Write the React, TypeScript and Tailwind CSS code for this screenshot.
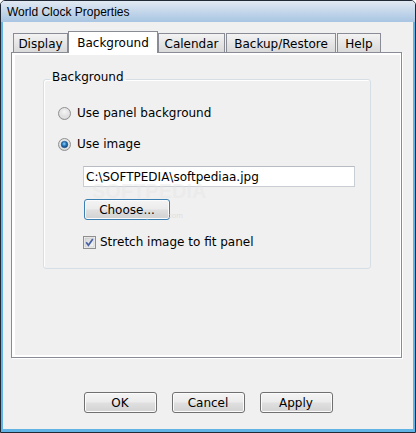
import React from 'react'

type Tab = {
  label: string;
  width: string;
  selected?: boolean;
}

const tabs: Tab[] = [
  { label: 'Display', width: 'w-[55px]' },
  { label: 'Background', width: 'w-[90px]', selected: true },
  { label: 'Calendar', width: 'w-[67px]' },
  { label: 'Backup/Restore', width: 'w-[110px] ml-[1px]' },
  { label: 'Help', width: 'w-[44px] ml-[1px]' },
]

const Radio = ({ checked }: { checked?: boolean }) => (
  <svg width="13" height="13" viewBox="0 0 13 13" className="shrink-0">
    <defs>
      <radialGradient id="rbg" cx="50%" cy="35%" r="70%">
        <stop offset="0%" stopColor="#f6f6f6" />
        <stop offset="100%" stopColor="#cfcfcf" />
      </radialGradient>
      <radialGradient id="rdot" cx="45%" cy="40%" r="60%">
        <stop offset="0%" stopColor="#8fd3f7" />
        <stop offset="55%" stopColor="#2272b8" />
        <stop offset="100%" stopColor="#0d3f73" />
      </radialGradient>
    </defs>
    <circle cx="6.5" cy="6.5" r="6" fill="url(#rbg)" stroke="#8f9090" strokeWidth="1" />
    <circle cx="6.5" cy="6.5" r="4.2" fill="none" stroke="#e6e6e6" strokeWidth="0.8" />
    {checked && <circle cx="6.5" cy="6.5" r="3.3" fill="url(#rdot)" stroke="#1a4d80" strokeWidth="0.5" />}
  </svg>
)

const Checkbox = () => (
  <svg width="13" height="13" viewBox="0 0 13 13" className="shrink-0">
    <defs>
      <linearGradient id="cbg" x1="0" y1="0" x2="1" y2="1">
        <stop offset="0%" stopColor="#d4d4d4" />
        <stop offset="100%" stopColor="#f7f7f7" />
      </linearGradient>
    </defs>
    <rect x="0.5" y="0.5" width="12" height="12" fill="#f4f4f4" stroke="#8f8f8f" />
    <rect x="2" y="2" width="9" height="9" fill="url(#cbg)" stroke="#c2c2c2" strokeWidth="0.6" />
    <path d="M3.2 6.3 L5.4 9.2 L9.8 3" fill="none" stroke="#4661a6" strokeWidth="1.7" />
  </svg>
)

const Button = ({ label, focused }: { label: string; focused?: boolean }) => (
  <button
    className={`h-[21px] rounded-[3px] border text-[12px] leading-none text-black bg-[linear-gradient(to_bottom,#f4f4f4_0%,#ececec_45%,#dfdfdf_55%,#d2d2d2_100%)] shadow-[inset_0_0_0_1px_#fbfbfb] ${
      focused ? 'w-[86px] border-[#3c7fb1] shadow-[inset_0_0_0_1px_#9fdbf9]' : 'w-[73px] border-[#707070]'
    }`}
  >
    {label}
  </button>
)

const App = () => {
  return (
    <div className="w-[416px] h-[433px] border border-[#1f2a36] rounded-t-[5px] overflow-hidden flex flex-col font-['DejaVu_Sans',sans-serif] text-[12px] text-black">
      {/* title bar */}
      <div className="h-[21px] shrink-0 bg-gradient-to-b from-[#e1e9f2] to-[#a8c5e3] pl-[6px] flex items-center font-['Liberation_Sans',sans-serif] text-[12px]">
        World Clock Properties
      </div>

      <div className="flex-1 border-x-2 border-b-[3px] border-[#62b4e4] bg-[#f0f0f0] flex flex-col">
        <div className="ml-[8px] pt-[9px] w-[391px]">
          {/* tabs */}
          <div className="flex items-end h-[21px] pl-[2px]">
            {tabs.map((t) =>
              t.selected ? (
                <div
                  key={t.label}
                  className={`${t.width} h-[22px] -mb-px relative z-10 bg-white border border-b-0 border-[#898c95] flex items-center justify-center`}
                >
                  {t.label}
                </div>
              ) : (
                <div
                  key={t.label}
                  className={`${t.width} h-[19px] pt-[2px] border border-b-0 border-[#898c95] bg-gradient-to-b from-[#f3f3f3] to-[#d9d9d9] flex items-center justify-center`}
                >
                  {t.label}
                </div>
              )
            )}
          </div>

          {/* panel */}
          <div className="h-[306px] border border-[#898c95] bg-[#f0f0f0] shadow-[inset_3px_2px_0_#ffffff,inset_-1px_-2px_0_#ffffff,1px_1px_0_#ffffff] pt-[17px] pl-[31px]">
            <fieldset className="relative w-[328px] h-[199px] rounded-[3px] border border-[#d5dfe5] shadow-[inset_1px_1px_0_#ffffff]">
              <legend className="ml-[6px] px-[2px] leading-[14px] pb-[4px]">Background</legend>
              <div className="flex flex-col pl-[14px]">
                <label className="mt-[17px] h-[16px] flex items-center gap-[6px]">
                  <Radio />
                  <span>Use panel background</span>
                </label>
                <label className="mt-[15px] h-[16px] flex items-center gap-[6px]">
                  <Radio checked />
                  <span>Use image</span>
                </label>
                <div className="mt-[14px] ml-[25px] w-[272px] h-[21px] bg-white border border-[#c9ced4] border-t-[#b7bcc2] flex items-center pl-[2px]">
                  C:\SOFTPEDIA\softpediaa.jpg
                </div>
                <div className="mt-[12px] ml-[26px]">
                  <Button label="Choose..." focused />
                </div>
                <label className="mt-[14px] ml-[25px] h-[16px] flex items-center gap-[4px]">
                  <Checkbox />
                  <span>Stretch image to fit panel</span>
                </label>
              </div>

              {/* watermark */}
              <div className="absolute left-[48px] top-[93px] text-[20px] font-bold leading-none text-[#e4e4e4]/40 pointer-events-none select-none font-['Liberation_Sans',sans-serif]">
                SOFTPEDIA
              </div>
              <div className="absolute left-[70px] top-[124px] text-[8px] leading-none text-[#d6d6d6]/70 pointer-events-none select-none font-['Liberation_Sans',sans-serif]">
                www.softpedia.com
              </div>
            </fieldset>
          </div>
        </div>

        {/* dialog buttons */}
        <div className="mt-[34px] flex justify-center gap-[15px]">
          <Button label="OK" />
          <Button label="Cancel" />
          <Button label="Apply" />
        </div>
      </div>
    </div>
  )
}

export default App
